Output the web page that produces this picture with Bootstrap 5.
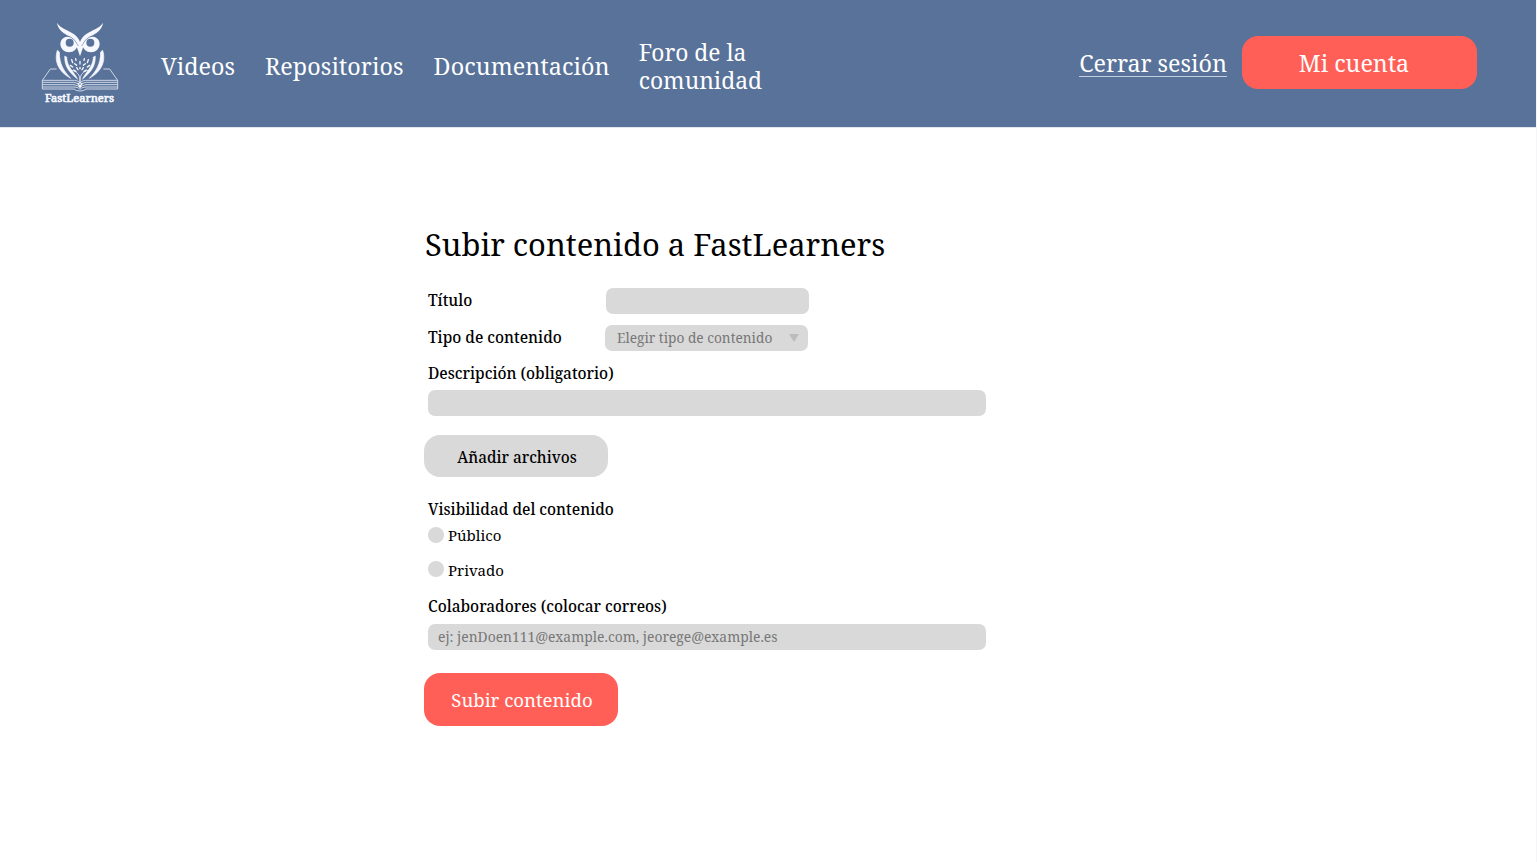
<!DOCTYPE html>
<html lang="es">
<head>
<meta charset="utf-8">
<meta name="viewport" content="width=device-width, initial-scale=1">
<title>Subir contenido a FastLearners</title>
<link href="https://cdn.jsdelivr.net/npm/bootstrap@5.3.0/dist/css/bootstrap.min.css" rel="stylesheet">
<style>
  :root{--ink-blue:#587299;--coral:#ff5f57;--field:#d9d9d9}
  body{font-family:"Noto Serif","DejaVu Serif Condensed","DejaVu Serif",serif;color:#000;background:#fff;min-height:862px;overflow:hidden}
  .page{width:1536px;min-height:862px;box-shadow:1px 0 0 #f5f5f7}
  .topbar{height:127px;background:var(--ink-blue);padding:0 59px 0 30px;font-size:23.3px;line-height:28px;box-shadow:0 1px 0 #dfe5ef}
  .topbar a{color:#fff;text-decoration:none;white-space:nowrap}
  .brand-owl{width:100px;height:110px;margin:2px 31px 0 0}
  .main-links{gap:30px;padding-top:5px}
  .main-links .forum{font-size:22.8px;margin:2px 0 0 -1px}
  .main-links .wider{letter-spacing:.1px}
  .main-links span{display:block}
  .logout{border-bottom:1px solid #c3cddb;line-height:26px;margin:5px 15px 0 0;padding-top:1px}
  .pill{border:0;border-radius:16px;padding:0;display:flex;align-items:center;justify-content:center}
  .pill-coral,.pill-coral:hover{background:var(--coral);color:#fff}
  .pill-account{width:235px;height:53px;font-size:23.3px;padding:2px 11px 0 0}
  .pill-send{width:194px;height:53px;font-size:18.6px;margin:23px 0 0 -4px;padding-left:2px}
  .pill-files,.pill-files:hover{background:var(--field);color:#000;width:184px;height:42px;margin:19px 0 0 -4px;padding:3px 0 0 2px}
  .pill-files{font-size:15.3px}
  .upload{width:558px;margin-left:428px;padding-top:95px}
  .upload h1{font-size:30.9px;line-height:44px;margin:0 0 22px -3px;white-space:nowrap;font-weight:400}
  .medium{font-weight:500}
  .upload label,.upload legend{font-size:15.4px;line-height:22px;margin:0;display:block;float:none}
  .field{height:26px;background:var(--field);border:0;border-radius:7px;padding:0 10px;font-size:13.85px;line-height:26px;color:#777}
  .field::placeholder{color:#777;opacity:1}
  .field:focus{background:var(--field)}
  .side-label{width:178px}
  .short{width:203px}
  .type-row{margin-top:11px}
  .picker{margin-left:-1px;padding:0 9px 0 12px;font-size:13.7px;line-height:24px}
  .picker span{padding-bottom:1px}
  .upload .desc-label{margin-top:12px}
  .desc-field{margin-top:5px}
  .visibility{margin-top:22px}
  .dot{appearance:none;width:16px;height:16px;border-radius:50%;background:var(--field);margin:0 4px 0 0}
  .upload .option{font-size:15px;margin-top:3px}
  .upload .option-private{margin-top:13px}
  .option-private .dot{margin-top:-3px}
  .upload .collab-label{margin:15px 0 6px}
</style>
</head>
<body>
<div class="page">
  <nav class="topbar d-flex align-items-start">
    <a href="#" class="d-block mt-2" aria-label="FastLearners">
      <svg class="brand-owl d-block" viewBox="0 0 300 330">
        <g fill="none" stroke="#dfe6f1" stroke-width="2.6">
          <path d="M80 177H61L37 211H134Q146 212 150 219Q154 212 166 211H263L239 177H220"/>
          <path d="M37 211V237H132Q138 243 150 243Q162 243 168 237H263V211"/>
          <path d="M37 217H132Q145 218 150 228Q155 218 168 217H263M37 224H132Q144 225 150 234Q156 225 168 224H263M37 231H132Q145 231 150 238Q155 231 168 231H263"/>
          <path d="M120 181Q142 181 149 201V222M180 181Q158 181 151 201V222"/>
        </g>
        <g fill="#f7f8ff">
          <path fill-rule="evenodd" d="M91 103A24 24 0 0 1 106 81Q128 76 143 103A26 24 0 0 1 91 103ZM107 98A12 12 0 1 0 131 98A12 12 0 0 0 107 98ZM209 103A24 24 0 0 0 194 81Q172 76 157 103A26 24 0 0 0 209 103ZM193 98A12 12 0 1 1 169 98A12 12 0 0 1 193 98Z"/>
          <path stroke="#587299" stroke-width="2" paint-order="stroke" d="M81 38C92 56 112 59 130 71Q145 81 150 96Q155 81 170 71C188 59 208 56 219 38C216 61 197 71 181 79Q163 88 156 106L150 111L144 106Q137 88 119 79C103 71 84 61 81 38Z"/>
          <path d="M138 104Q150 112 162 104L150 139Z"/>
          <path d="M82 121C72 153 84 184 122 205C101 183 88 162 88 126ZM218 121C228 153 216 184 178 205C199 183 212 162 212 126Z" stroke="#f7f8ff" stroke-width="2"/>
          <path d="M104 138C103 168 115 185 143 208C131 182 112 174 110 141ZM196 138C197 168 185 185 157 208C169 182 188 174 190 141Z" stroke="#f7f8ff" stroke-width="1.5"/>
        </g>
        <g stroke="#f7f8ff" stroke-width="4" stroke-linecap="round" fill="none">
          <path d="M125 149L128 158M137 146L138 151M163 146L162 151M175 149L172 158M150 154V162M121 166L128 171M134 161L140 166M166 161L160 166M179 166L172 171M131 180L138 184M169 180L162 184M140 173L144 179M160 173L156 179M150 172V176"/>
          <path d="M144 220L149 229M156 220L151 229"/>
        </g>
        <text x="45" y="277" font-size="34" fill="#f7f8ff" stroke="#f7f8ff" stroke-width="2" textLength="207" lengthAdjust="spacingAndGlyphs">FastLearners</text>
      </svg>
    </a>
    <div class="main-links d-flex align-items-center align-self-center">
      <a href="#">Videos</a>
      <a href="#" class="wider">Repositorios</a>
      <a href="#" class="wider">Documentación</a>
      <a href="#" class="forum"><span>Foro de la</span><span>comunidad</span></a>
    </div>
    <div class="d-flex align-items-center align-self-start ms-auto mt-4 pt-2">
      <a href="#" class="logout">Cerrar sesión</a>
      <a href="#" class="btn pill pill-coral pill-account mt-1">Mi cuenta</a>
    </div>
  </nav>

  <form class="upload">
    <h1>Subir contenido a FastLearners</h1>
    <div class="d-flex align-items-center">
      <label class="side-label medium" for="titulo">Título</label>
      <input id="titulo" class="form-control field short" type="text">
    </div>
    <div class="type-row d-flex align-items-center">
      <label class="side-label medium" for="tipo">Tipo de contenido</label>
      <div id="tipo" class="field short picker d-flex align-items-center justify-content-between" role="button">
        <span>Elegir tipo de contenido</span>
        <svg width="10" height="8" viewBox="0 0 10 8"><path d="M0 0H10L5 8Z" fill="#bcbcbc"/></svg>
      </div>
    </div>
    <label class="medium desc-label" for="desc">Descripción (obligatorio)</label>
    <input id="desc" class="form-control field desc-field" type="text">
    <button type="button" class="btn pill pill-files medium">Añadir archivos</button>
    <fieldset class="visibility">
      <legend class="medium">Visibilidad del contenido</legend>
      <label class="option d-flex align-items-center"><input class="dot" type="radio" name="vis">Público</label>
      <label class="option option-private d-flex align-items-center"><input class="dot" type="radio" name="vis">Privado</label>
    </fieldset>
    <label class="medium collab-label" for="colab">Colaboradores (colocar correos)</label>
    <input id="colab" class="form-control field" type="text" placeholder="ej: jenDoen111@example.com, jeorege@example.es">
    <button type="button" class="btn pill pill-coral pill-send">Subir contenido</button>
  </form>
</div>
<script src="https://cdn.jsdelivr.net/npm/bootstrap@5.3.0/dist/js/bootstrap.bundle.min.js"></script>
</body>
</html>
